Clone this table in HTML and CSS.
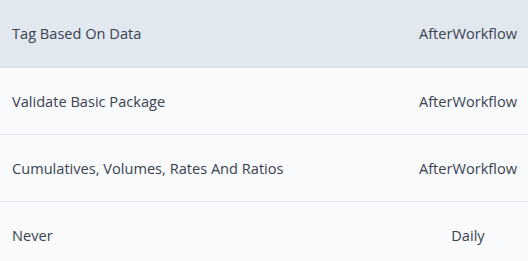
FILE: index.html
```
<!DOCTYPE html>
<html lang="en">
<head>
  <meta charset="UTF-8" />
  <meta name="viewport" content="width=device-width, initial-scale=1.0" />
  <title>Schedules</title>
  <link rel="stylesheet" href="styles.css">
</head>
<body>
  <table class="schedule-table">
    <tbody>
      <tr class="selected">
        <td class="name">Tag Based On Data</td>
        <td class="when">AfterWorkflow</td>
      </tr>
      <tr>
        <td class="name">Validate Basic Package</td>
        <td class="when">AfterWorkflow</td>
      </tr>
      <tr>
        <td class="name">Cumulatives, Volumes, Rates And Ratios</td>
        <td class="when">AfterWorkflow</td>
      </tr>
      <tr>
        <td class="name">Never</td>
        <td class="when">Daily</td>
      </tr>
    </tbody>
  </table>
</body>
</html>
```

FILE: styles.css
```
body {
  margin: 0;
  font-family: "Open Sans", "Noto Sans", sans-serif;
  background-color: #f8fafc;
  color: #3b4250;
}

.schedule-table {
  width: 100%;
  border-collapse: collapse;
  font-size: 14.6px;
}

.schedule-table tr {
  height: 67px;
  background-color: #f8fafc;
  border-bottom: 1px solid #e2e8f0;
}

.schedule-table tr.selected {
  background-color: #e2e8f0;
  border-bottom-color: #d7dee8;
}

.schedule-table td {
  padding: 0 12px;
  white-space: nowrap;
}

.schedule-table .when {
  width: 1%;
  text-align: center;
  padding-right: 11px;
}
```
